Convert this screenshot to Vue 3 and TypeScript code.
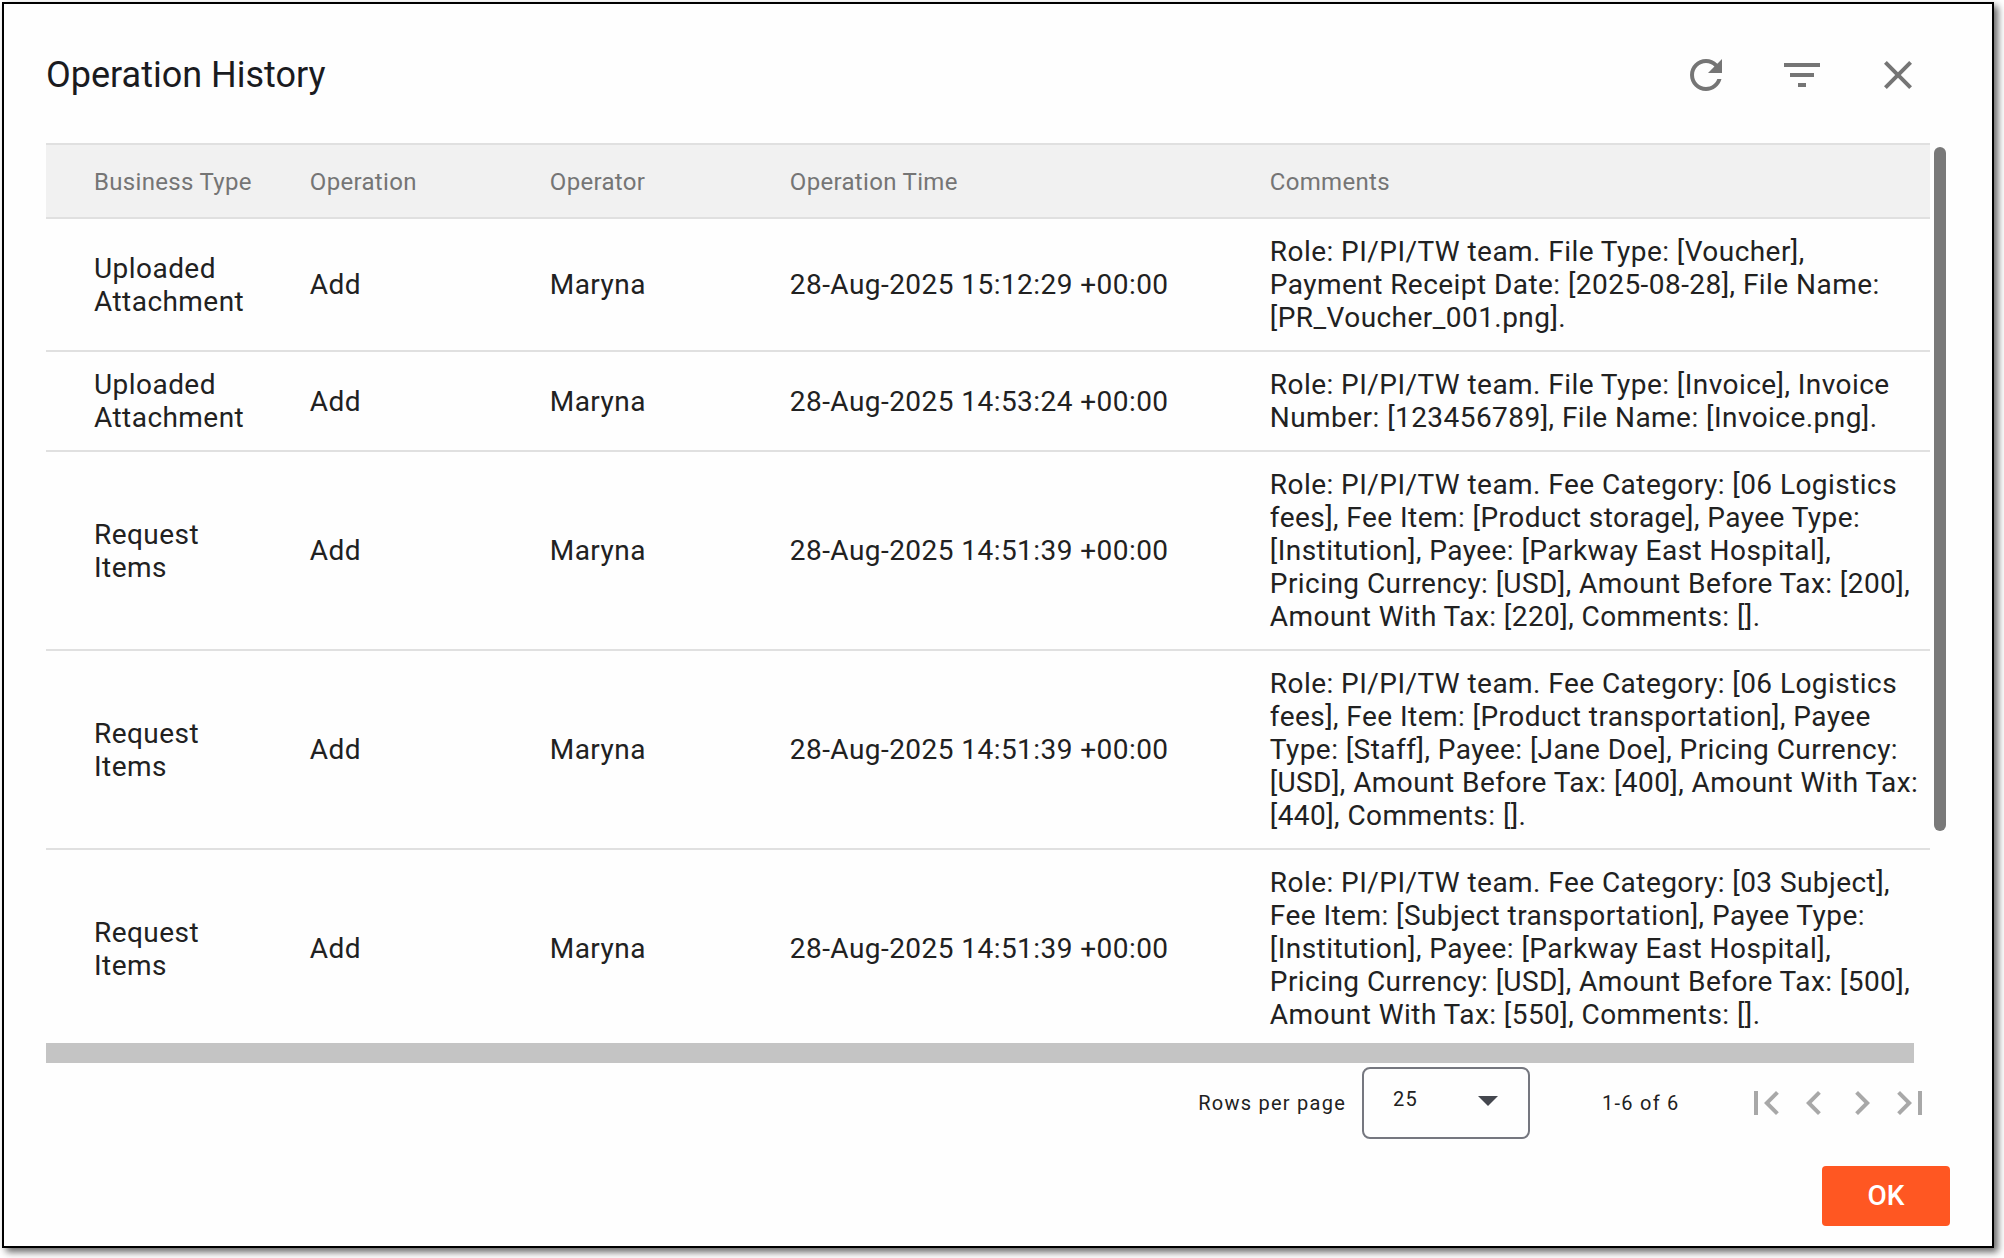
<script setup lang="ts">
import { ref } from 'vue'

interface HistoryRow {
  type: string[]
  operation: string
  operator: string
  time: string
  comments: string[]
}

const columns: string[] = ['Business Type', 'Operation', 'Operator', 'Operation Time', 'Comments']

const rows = ref<HistoryRow[]>([
  {
    type: ['Uploaded', 'Attachment'],
    operation: 'Add',
    operator: 'Maryna',
    time: '28-Aug-2025 15:12:29 +00:00',
    comments: [
      'Role: PI/PI/TW team. File Type: [Voucher],',
      'Payment Receipt Date: [2025-08-28], File Name:',
      '[PR_Voucher_001.png].',
    ],
  },
  {
    type: ['Uploaded', 'Attachment'],
    operation: 'Add',
    operator: 'Maryna',
    time: '28-Aug-2025 14:53:24 +00:00',
    comments: [
      'Role: PI/PI/TW team. File Type: [Invoice], Invoice',
      'Number: [123456789], File Name: [Invoice.png].',
    ],
  },
  {
    type: ['Request', 'Items'],
    operation: 'Add',
    operator: 'Maryna',
    time: '28-Aug-2025 14:51:39 +00:00',
    comments: [
      'Role: PI/PI/TW team. Fee Category: [06 Logistics',
      'fees], Fee Item: [Product storage], Payee Type:',
      '[Institution], Payee: [Parkway East Hospital],',
      'Pricing Currency: [USD], Amount Before Tax: [200],',
      'Amount With Tax: [220], Comments: [].',
    ],
  },
  {
    type: ['Request', 'Items'],
    operation: 'Add',
    operator: 'Maryna',
    time: '28-Aug-2025 14:51:39 +00:00',
    comments: [
      'Role: PI/PI/TW team. Fee Category: [06 Logistics',
      'fees], Fee Item: [Product transportation], Payee',
      'Type: [Staff], Payee: [Jane Doe], Pricing Currency:',
      '[USD], Amount Before Tax: [400], Amount With Tax:',
      '[440], Comments: [].',
    ],
  },
  {
    type: ['Request', 'Items'],
    operation: 'Add',
    operator: 'Maryna',
    time: '28-Aug-2025 14:51:39 +00:00',
    comments: [
      'Role: PI/PI/TW team. Fee Category: [03 Subject],',
      'Fee Item: [Subject transportation], Payee Type:',
      '[Institution], Payee: [Parkway East Hospital],',
      'Pricing Currency: [USD], Amount Before Tax: [500],',
      'Amount With Tax: [550], Comments: [].',
    ],
  },
])

const actions = [
  {
    label: 'Refresh',
    path: 'M17.65 6.35C16.2 4.9 14.21 4 12 4c-4.42 0-7.99 3.58-7.99 8s3.57 8 7.99 8c3.73 0 6.84-2.55 7.73-6h-2.08c-.82 2.33-3.04 4-5.65 4-3.31 0-6-2.69-6-6s2.69-6 6-6c1.66 0 3.14.69 4.22 1.78L13 11h7V4l-2.35 2.35z',
  },
  { label: 'Filter', path: 'M10 18h4v-2h-4v2zM3 6v2h18V6H3zm3 7h12v-2H6v2z' },
  {
    label: 'Close',
    path: 'M19 6.41L17.59 5 12 10.59 6.41 5 5 6.41 10.59 12 5 17.59 6.41 19 12 13.41 17.59 19 19 17.59 13.41 12z',
  },
]

const pagers = [
  { label: 'First page', path: 'M18.41 16.59L13.82 12l4.59-4.59L17 6l-6 6 6 6zM6 6h2v12H6z' },
  { label: 'Previous page', path: 'M15.41 7.41L14 6l-6 6 6 6 1.41-1.41L10.83 12z' },
  { label: 'Next page', path: 'M10 6L8.59 7.41 13.17 12l-4.58 4.59L10 18l6-6z' },
  { label: 'Last page', path: 'M5.59 7.41L10.18 12l-4.59 4.59L7 18l6-6-6-6zM16 6h2v12h-2z' },
]
</script>

<template>
  <div class="page">
    <section class="dialog" role="dialog">
      <header class="head">
        <h1 class="title">Operation History</h1>
        <div class="actions">
          <button v-for="a in actions" :key="a.label" class="icon-btn" :aria-label="a.label">
            <svg viewBox="0 0 24 24" width="48" height="48"><path :d="a.path" /></svg>
          </button>
        </div>
      </header>

      <div class="viewport">
        <div class="table">
          <div class="row row-head">
            <div v-for="c in columns" :key="c" class="cell">{{ c }}</div>
          </div>
          <div v-for="(r, i) in rows" :key="i" class="row">
            <div class="cell">
              <div v-for="l in r.type" :key="l">{{ l }}</div>
            </div>
            <div class="cell">{{ r.operation }}</div>
            <div class="cell">{{ r.operator }}</div>
            <div class="cell">{{ r.time }}</div>
            <div class="cell">
              <div v-for="l in r.comments" :key="l">{{ l }}</div>
            </div>
          </div>
        </div>
        <div class="v-thumb"></div>
      </div>
      <div class="h-thumb"></div>

      <div class="paginator">
        <span class="label">Rows per page</span>
        <div class="select">
          <span class="value">25</span>
          <svg class="caret" viewBox="0 0 20 10" width="20" height="10"><path d="M0 0h20L10 10z" /></svg>
        </div>
        <span class="range">1-6 of 6</span>
        <div class="pagers">
          <button v-for="p in pagers" :key="p.label" class="icon-btn" :aria-label="p.label">
            <svg viewBox="0 0 24 24" width="48" height="48"><path :d="p.path" /></svg>
          </button>
        </div>
      </div>

      <footer class="foot">
        <button class="ok">OK</button>
      </footer>
    </section>
  </div>
</template>

<style>
body {
  background: #fff;
  overflow: hidden;
}
</style>

<style scoped>
.page {
  box-sizing: border-box;
  width: 2004px;
  height: 1258px;
  padding: 2px;
  overflow: hidden;
  font-family: Roboto, "Liberation Sans", sans-serif;
  color: #212121;
}
.dialog {
  box-sizing: border-box;
  width: 1992px;
  height: 1246px;
  border: 2px solid #000;
  background: #fefefe;
  box-shadow: 4px 4px 7px rgba(0, 0, 0, 0.6);
  display: flex;
  flex-direction: column;
  padding: 0 42px;
}
.head {
  height: 139px;
  display: flex;
  justify-content: space-between;
  flex: none;
}
.title {
  margin: 0;
  padding-top: 50px;
  font-size: 36px;
  line-height: 42px;
  font-weight: 400;
  color: #1a1b1f;
  white-space: nowrap;
}
.actions {
  display: flex;
  gap: 48px;
  padding: 47px 28px 0 0;
}
.icon-btn {
  width: 48px;
  height: 48px;
  padding: 0;
  border: 0;
  background: none;
}
.icon-btn svg {
  display: block;
  fill: #757575;
}
.viewport {
  height: 900px;
  overflow: hidden;
  display: flex;
  gap: 4px;
  flex: none;
}
.table {
  width: 1884px;
  flex: none;
}
.row {
  box-sizing: border-box;
  display: grid;
  grid-template-columns: 215.8px 240px 240px 480px 1fr;
  align-items: center;
  padding: 16px 0 16px 48px;
  border-bottom: 2px solid #e0e0e0;
  font-size: 28px;
  line-height: 33px;
  letter-spacing: 0.448px;
}
.row-head {
  height: 76px;
  padding-top: 2px;
  padding-bottom: 0;
  border-top: 2px solid #e0e0e0;
  background: #f1f1f1;
  color: #757575;
  font-size: 24px;
  letter-spacing: 0.32px;
}
.cell {
  white-space: nowrap;
}
.v-thumb {
  width: 12px;
  height: 684px;
  margin-top: 4px;
  border-radius: 6px;
  background: #797979;
}
.h-thumb {
  width: 1868px;
  height: 20px;
  background: #c4c4c4;
  flex: none;
}
.paginator {
  height: 80px;
  display: flex;
  align-items: center;
  justify-content: flex-end;
  padding-right: 16px;
  font-size: 20px;
  line-height: 26px;
  letter-spacing: 1.25px;
  flex: none;
}
.label {
  white-space: nowrap;
  margin-right: 16px;
}
.select {
  box-sizing: border-box;
  width: 168px;
  height: 72px;
  border: 2px solid #75777f;
  border-radius: 8px;
  display: flex;
  justify-content: space-between;
  padding: 17px 30px 0 29px;
}
.caret {
  fill: #44474e;
  margin-top: 10px;
}
.range {
  width: 140px;
  padding-left: 72px;
  white-space: nowrap;
}
.pagers {
  display: flex;
}
.pagers .icon-btn svg {
  fill: #a8a8a8;
}
.foot {
  display: flex;
  justify-content: flex-end;
  padding-top: 23px;
}
.ok {
  width: 128px;
  height: 60px;
  padding: 0;
  border: 0;
  border-radius: 4px;
  background: #ff5722;
  color: #fff;
  font: 500 28px/60px Roboto, "Liberation Sans", sans-serif;
}
</style>
